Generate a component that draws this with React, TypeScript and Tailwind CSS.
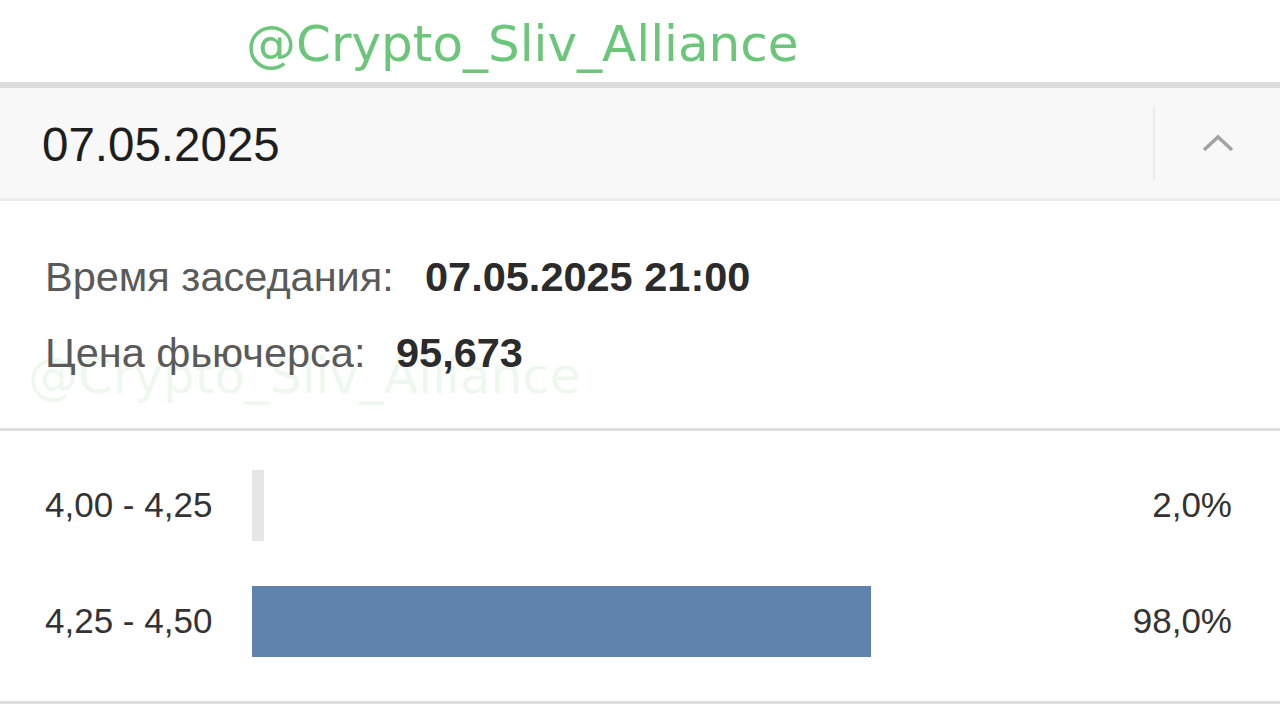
import React from "react";

const rows = [
  { label: "4,00 - 4,25", pct: "2,0%", width: 12, color: "bg-[#e6e6e6]" },
  { label: "4,25 - 4,50", pct: "98,0%", width: 619, color: "bg-[#5f83ad]" },
];

export default function App() {
  return (
    <div className="relative w-[1280px] h-[704px] overflow-hidden bg-white font-['Liberation_Sans',Arial,sans-serif]">
      <div className="h-[82px] flex items-start pl-[246px] pt-[14px]">
        <span className="font-['DejaVu_Sans',sans-serif] text-[50px] leading-[60px] text-[#6cc67a] whitespace-nowrap">@Crypto_Sliv_Alliance</span>
      </div>
      <div className="h-[6px] bg-[#dcdcdc]" />
      <div className="h-[110px] bg-[#f8f8f8] flex items-center">
        <div className="flex-1 pl-[42px] pt-[4px] text-[47.5px] text-[#1e1e1e]">07.05.2025</div>
        <div className="w-[2px] h-[74px] bg-[#ececec]" />
        <div className="w-[125px] flex items-center justify-center">
          <svg width="34" height="22" viewBox="0 0 34 22">
            <polyline points="3,18 17,5 31,18" fill="none" stroke="#a3a3a3" strokeWidth="3.5" />
          </svg>
        </div>
      </div>
      <div className="h-[3px] bg-[#ececec]" />
      <div className="h-[227px] relative pt-[50px] pl-[45px]">
        <div className="absolute left-[28px] top-[145px] font-['DejaVu_Sans',sans-serif] text-[50px] leading-[60px] text-[#eef8ef] whitespace-nowrap">@Crypto_Sliv_Alliance</div>
        <div className="relative flex items-baseline text-[41.5px] leading-[52px] whitespace-nowrap">
          <span className="text-[#5a5a5a] w-[380px] shrink-0">Время заседания:</span>
          <span className="font-bold text-[#2b2b2b]">07.05.2025 21:00</span>
        </div>
        <div className="relative flex items-baseline text-[41.5px] leading-[52px] mt-[24px] whitespace-nowrap">
          <span className="text-[#5a5a5a] w-[351px] shrink-0">Цена фьючерса:</span>
          <span className="font-bold text-[#2b2b2b]">95,673</span>
        </div>
      </div>
      <div className="h-[3px] bg-[#dedede]" />
      <div className="pt-[39px] flex flex-col gap-[45px]">
        {rows.map((r) => (
          <div key={r.label} className="flex items-center h-[71px]">
            <span className="w-[252px] shrink-0 pl-[45px] text-[35px] text-[#333] whitespace-nowrap">{r.label}</span>
            <div className="flex-1 h-full">
              <div className={`h-full ${r.color}`} style={{ width: r.width }} />
            </div>
            <span className="pr-[48px] text-[35px] text-[#333] whitespace-nowrap">{r.pct}</span>
          </div>
        ))}
      </div>
      <div className="absolute left-0 top-[701px] w-full h-[3px] bg-[#dddddd]" />
    </div>
  );
}
